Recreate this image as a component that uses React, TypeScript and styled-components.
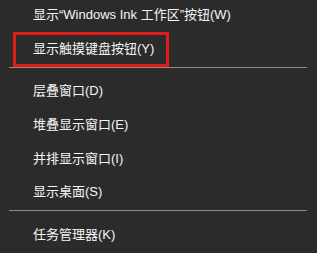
import styled, { createGlobalStyle } from 'styled-components'

const Global = createGlobalStyle`
  html, body {
    margin: 0;
    padding: 0;
    background: #2b2b2b;
    overflow: hidden;
  }
`

const Menu = styled.div`
  width: 317px;
  height: 253px;
  margin-top: -3px;
  background: #2b2b2b;
  display: flex;
  flex-direction: column;
  font-family: "Liberation Sans", "Noto Sans CJK SC", sans-serif;
`

const Item = styled.div`
  position: relative;
  height: 34px;
  display: flex;
  align-items: center;
  padding-left: 33px;
  color: #f5f5f5;
  font-size: 13px;
  white-space: nowrap;
`

const Highlight = styled.div`
  position: absolute;
  left: 13px;
  top: 1px;
  width: 156px;
  height: 35px;
  box-sizing: border-box;
  border: 3px solid #e31a1a;
`

const Separator = styled.div`
  height: 1px;
  margin: 3px 10px 5px 9px;
  background: #8c8c8c;
`

const App: React.FC = () => {
  return (
    <>
      <Global />
      <Menu>
        <Item>显示“Windows Ink 工作区”按钮(W)</Item>
        <Item>
          显示触摸键盘按钮(Y)
          <Highlight />
        </Item>
        <Separator />
        <Item>层叠窗口(D)</Item>
        <Item>堆叠显示窗口(E)</Item>
        <Item>并排显示窗口(I)</Item>
        <Item>显示桌面(S)</Item>
        <Separator />
        <Item>任务管理器(K)</Item>
      </Menu>
    </>
  )
}

export default App
